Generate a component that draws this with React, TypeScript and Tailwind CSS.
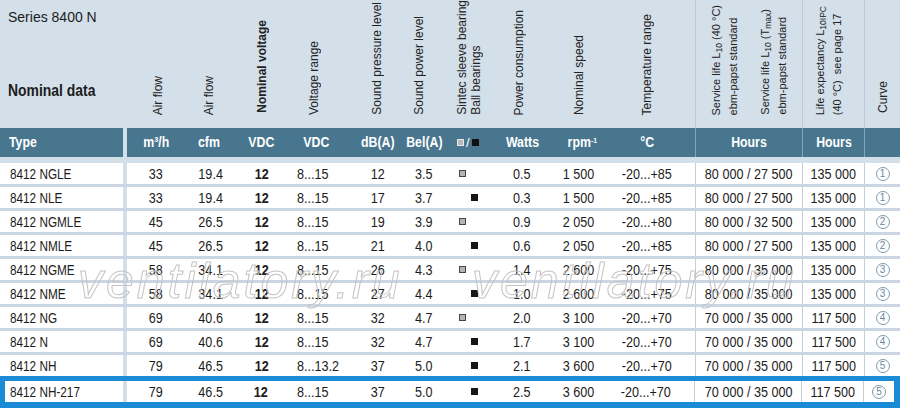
import React from "react";

type Fan = {
  type: string;
  m3h: string;
  cfm: string;
  vdc: string;
  range: string;
  db: string;
  bel: string;
  ball: boolean;
  watts: string;
  rpm: string;
  temp: string;
  service: string;
  life: string;
  curve: string;
};

const fans: Fan[] = [
  { type: "8412 NGLE", m3h: "33", cfm: "19.4", vdc: "12", range: "8...15", db: "12", bel: "3.5", ball: false, watts: "0.5", rpm: "1 500", temp: "-20...+85", service: "80 000 / 27 500", life: "135 000", curve: "1" },
  { type: "8412 NLE", m3h: "33", cfm: "19.4", vdc: "12", range: "8...15", db: "17", bel: "3.7", ball: true, watts: "0.3", rpm: "1 500", temp: "-20...+85", service: "80 000 / 27 500", life: "135 000", curve: "1" },
  { type: "8412 NGMLE", m3h: "45", cfm: "26.5", vdc: "12", range: "8...15", db: "19", bel: "3.9", ball: false, watts: "0.9", rpm: "2 050", temp: "-20...+80", service: "80 000 / 32 500", life: "135 000", curve: "2" },
  { type: "8412 NMLE", m3h: "45", cfm: "26.5", vdc: "12", range: "8...15", db: "21", bel: "4.0", ball: true, watts: "0.6", rpm: "2 050", temp: "-20...+85", service: "80 000 / 27 500", life: "135 000", curve: "2" },
  { type: "8412 NGME", m3h: "58", cfm: "34.1", vdc: "12", range: "8...15", db: "26", bel: "4.3", ball: false, watts: "1.4", rpm: "2 600", temp: "-20...+75", service: "80 000 / 35 000", life: "135 000", curve: "3" },
  { type: "8412 NME", m3h: "58", cfm: "34.1", vdc: "12", range: "8...15", db: "27", bel: "4.4", ball: true, watts: "1.0", rpm: "2 600", temp: "-20...+75", service: "80 000 / 35 000", life: "135 000", curve: "3" },
  { type: "8412 NG", m3h: "69", cfm: "40.6", vdc: "12", range: "8...15", db: "32", bel: "4.7", ball: false, watts: "2.0", rpm: "3 100", temp: "-20...+70", service: "70 000 / 35 000", life: "117 500", curve: "4" },
  { type: "8412 N", m3h: "69", cfm: "40.6", vdc: "12", range: "8...15", db: "32", bel: "4.7", ball: true, watts: "1.7", rpm: "3 100", temp: "-20...+70", service: "70 000 / 35 000", life: "117 500", curve: "4" },
  { type: "8412 NH", m3h: "79", cfm: "46.5", vdc: "12", range: "8...13.2", db: "37", bel: "5.0", ball: true, watts: "2.1", rpm: "3 600", temp: "-20...+70", service: "70 000 / 35 000", life: "117 500", curve: "5" },
  { type: "8412 NH-217", m3h: "79", cfm: "46.5", vdc: "12", range: "8...15", db: "37", bel: "5.0", ball: true, watts: "2.5", rpm: "3 600", temp: "-20...+70", service: "70 000 / 35 000", life: "117 500", curve: "5" },
];

// the print uses a condensed grotesque; squeeze Liberation Sans to the same width
const N: React.FC<{ children: React.ReactNode }> = ({ children }) => (
  <span className="inline-block whitespace-nowrap scale-x-[0.9]">{children}</span>
);

const B: React.FC<{ children: React.ReactNode }> = ({ children }) => (
  <span className="inline-block whitespace-nowrap scale-x-[0.85]">{children}</span>
);

const Vert: React.FC<{ children: React.ReactNode; bold?: boolean; small?: boolean }> = ({ children, bold, small }) => (
  <span
    className={`[writing-mode:vertical-rl] rotate-180 whitespace-nowrap leading-[14px] ${
      small ? "text-[11px]" : "text-[12px]"
    } ${bold ? "font-bold" : ""}`}
  >
    {children}
  </span>
);

const Sub: React.FC<{ children: React.ReactNode }> = ({ children }) => (
  <span className="align-sub text-[8.5px]">{children}</span>
);

const FanRow: React.FC<{ fan: Fan; last?: boolean }> = ({ fan, last }) => (
  <div className="flex h-[21px] text-[14px] leading-none text-[#1c1c1c]">
    <div className={`${last ? "w-[118px] pl-[5px]" : "w-[123px] pl-[10px]"} bg-white flex items-center`}>
      <span className="inline-block whitespace-nowrap origin-left scale-x-[0.84]">{fan.type}</span>
    </div>
    <div className="w-[4px] bg-[#d3dfe9]" />
    <div className="w-[58px] bg-white flex items-center justify-center"><N>{fan.m3h}</N></div>
    <div className="w-[48px] bg-white flex items-center justify-center pl-[4px]"><N>{fan.cfm}</N></div>
    <div className="w-[57px] bg-white flex items-center justify-center font-bold"><N>{fan.vdc}</N></div>
    <div className="w-[58px] bg-white flex items-center pl-[7px]">
      <span className="inline-block whitespace-nowrap origin-left scale-x-[0.9]">{fan.range}</span>
    </div>
    <div className="w-[57px] bg-white flex items-center justify-center pl-[3px]"><N>{fan.db}</N></div>
    <div className="w-[38px] bg-white flex items-center justify-center"><N>{fan.bel}</N></div>
    <div className="w-[52px] bg-white flex items-center">
      {fan.ball ? (
        <span className="ml-[28px] w-[7px] h-[7px] bg-[#161616]" />
      ) : (
        <span className="ml-[16px] w-[7px] h-[7px] bg-[#b4b4b4] border border-[#474747]" />
      )}
    </div>
    <div className="w-[54px] bg-white flex items-center justify-center"><N>{fan.watts}</N></div>
    <div className="w-[60px] bg-white flex items-center justify-center"><N>{fan.rpm}</N></div>
    <div className="w-[86px] bg-white flex items-center justify-center pr-[10px]"><N>{fan.temp}</N></div>
    <div className="w-[107px] bg-white flex items-center justify-center border-l border-[#c3d0db]"><N>{fan.service}</N></div>
    <div className="w-[62px] bg-white flex items-center justify-center border-l border-[#c3d0db]"><N>{fan.life}</N></div>
    <div className={`${last ? "w-[31px]" : "w-[36px]"} bg-white flex items-center justify-center border-l border-[#c3d0db]`}>
      <span className="w-[14px] h-[14px] rounded-full border border-[#7f98ab] text-[10px] text-[#6b879b] flex items-center justify-center">
        {fan.curve}
      </span>
    </div>
  </div>
);

export default function App() {
  const body = fans.slice(0, 9);
  const picked = fans[9];

  return (
    <div className="relative w-[900px] h-[408px] overflow-hidden bg-[#d3dfe9] text-[#1c1c1c] font-['Liberation_Sans',Arial,sans-serif]">
      {/* TOP HEADER */}
      <div className="flex h-[128px]">
        <div className="w-[123px] flex flex-col justify-between pl-[8px] pt-[7px] pb-[27px]">
          <p className="text-[14px] leading-[20px] whitespace-nowrap">Series 8400 N</p>
          <p className="text-[16px] leading-[20px] font-bold">
            <span className="inline-block whitespace-nowrap origin-left scale-x-[0.87]">Nominal data</span>
          </p>
        </div>
        <div className="w-[4px]" />
        <div className="flex text-[#222]">
          <div className="w-[58px] flex items-end justify-center pb-[13px] pl-[4px]">
            <Vert>Air flow</Vert>
          </div>
          <div className="w-[48px] flex items-end justify-center pb-[13px]">
            <Vert>Air flow</Vert>
          </div>
          <div className="w-[57px] flex items-end justify-center pb-[15px]">
            <Vert bold>Nominal voltage</Vert>
          </div>
          <div className="w-[58px] flex items-end justify-center pb-[13px] pr-[10px]">
            <Vert>Voltage range</Vert>
          </div>
          <div className="w-[57px] flex items-end justify-center pb-[13px]">
            <Vert>Sound pressure level</Vert>
          </div>
          <div className="w-[38px] flex items-end justify-center pb-[13px] pr-[10px]">
            <Vert>Sound power level</Vert>
          </div>
          <div className="w-[52px] flex items-end justify-center pb-[13px]">
            <Vert>
              Sintec sleeve bearing
              <br />
              Ball bearings
            </Vert>
          </div>
          <div className="w-[54px] flex items-end justify-center pb-[13px] pr-[6px]">
            <Vert>Power consumption</Vert>
          </div>
          <div className="w-[60px] flex items-end justify-center pb-[13px]">
            <Vert>Nominal speed</Vert>
          </div>
          <div className="w-[86px] flex items-end justify-center pb-[13px] pr-[10px]">
            <Vert>Temperature range</Vert>
          </div>
          <div className="w-[107px] flex items-end justify-center gap-[18px] pb-[13px] border-l border-[#bccbd7]">
            <Vert small>
              Service life L<Sub>10</Sub> (40 °C)
              <br />
              ebm-papst standard
            </Vert>
            <Vert small>
              Service life L<Sub>10</Sub> (T<Sub>max</Sub>)
              <br />
              ebm-papst standard
            </Vert>
          </div>
          <div className="w-[62px] flex items-end justify-center pb-[13px] pr-[10px] border-l border-[#bccbd7]">
            <Vert small>
              Life expectancy L<Sub>10IPC</Sub>
              <br />
              (40 °C)&nbsp; see page 17
            </Vert>
          </div>
          <div className="w-[36px] flex items-end justify-center pb-[15px] border-l border-[#bccbd7]">
            <Vert>Curve</Vert>
          </div>
        </div>
      </div>

      {/* UNITS BAND */}
      <div className="flex h-[29px] text-[14.5px] font-bold text-white leading-none">
        <div className="w-[123px] bg-[#48768f] flex items-center pl-[9px]">
          <span className="inline-block origin-left scale-x-[0.85]">Type</span>
        </div>
        <div className="w-[4px]" />
        <div className="w-[58px] bg-[#48768f] flex items-center justify-center"><B>m³/h</B></div>
        <div className="w-[48px] bg-[#48768f] flex items-center justify-center"><B>cfm</B></div>
        <div className="w-[57px] bg-[#48768f] flex items-center justify-center"><B>VDC</B></div>
        <div className="w-[58px] bg-[#48768f] flex items-center justify-center pr-[6px]"><B>VDC</B></div>
        <div className="w-[57px] bg-[#48768f] flex items-center justify-center pl-[3px]"><B>dB(A)</B></div>
        <div className="w-[38px] bg-[#48768f] flex items-center justify-center"><B>Bel(A)</B></div>
        <div className="w-[52px] bg-[#48768f] flex items-center pl-[14px] gap-[2px]">
          <span className="w-[7px] h-[7px] bg-[#b9b9b9] border border-[#e8e8e8]" />
          <span className="font-normal text-[13px]">/</span>
          <span className="w-[7px] h-[7px] bg-[#111]" />
        </div>
        <div className="w-[54px] bg-[#48768f] flex items-center justify-center"><B>Watts</B></div>
        <div className="w-[60px] bg-[#48768f] flex items-center justify-center pl-[6px]">
          <B>
            rpm<sup className="text-[8px]">-1</sup>
          </B>
        </div>
        <div className="w-[86px] bg-[#48768f] flex items-center justify-center pr-[10px]"><B>°C</B></div>
        <div className="w-[107px] bg-[#48768f] flex items-center justify-center border-l border-[#87a4b7]"><B>Hours</B></div>
        <div className="w-[62px] bg-[#48768f] flex items-center justify-center border-l border-[#87a4b7]"><B>Hours</B></div>
        <div className="w-[36px] bg-[#48768f] border-l border-[#87a4b7]" />
      </div>

      {/* ROWS */}
      <div className="mt-[6px] flex flex-col gap-[3px] bg-[#cad7e2]">
        {body.map((fan) => (
          <FanRow key={fan.type} fan={fan} />
        ))}
      </div>
      <div className="border-[5px] border-r-[6px] border-b-[6px] border-[#1b8bd6] bg-white">
        <FanRow fan={picked} last />
      </div>

      {/* WATERMARK */}
      <span className="pointer-events-none absolute left-[78px] top-[256px] text-[50px] leading-none italic tracking-[3px] text-transparent [-webkit-text-stroke:1px_#c4c4c4]">
        ventilatory.ru
      </span>
      <span className="pointer-events-none absolute left-[472px] top-[256px] text-[50px] leading-none italic tracking-[3px] text-transparent [-webkit-text-stroke:1px_#c4c4c4]">
        ventilatory.ru
      </span>
    </div>
  );
}
